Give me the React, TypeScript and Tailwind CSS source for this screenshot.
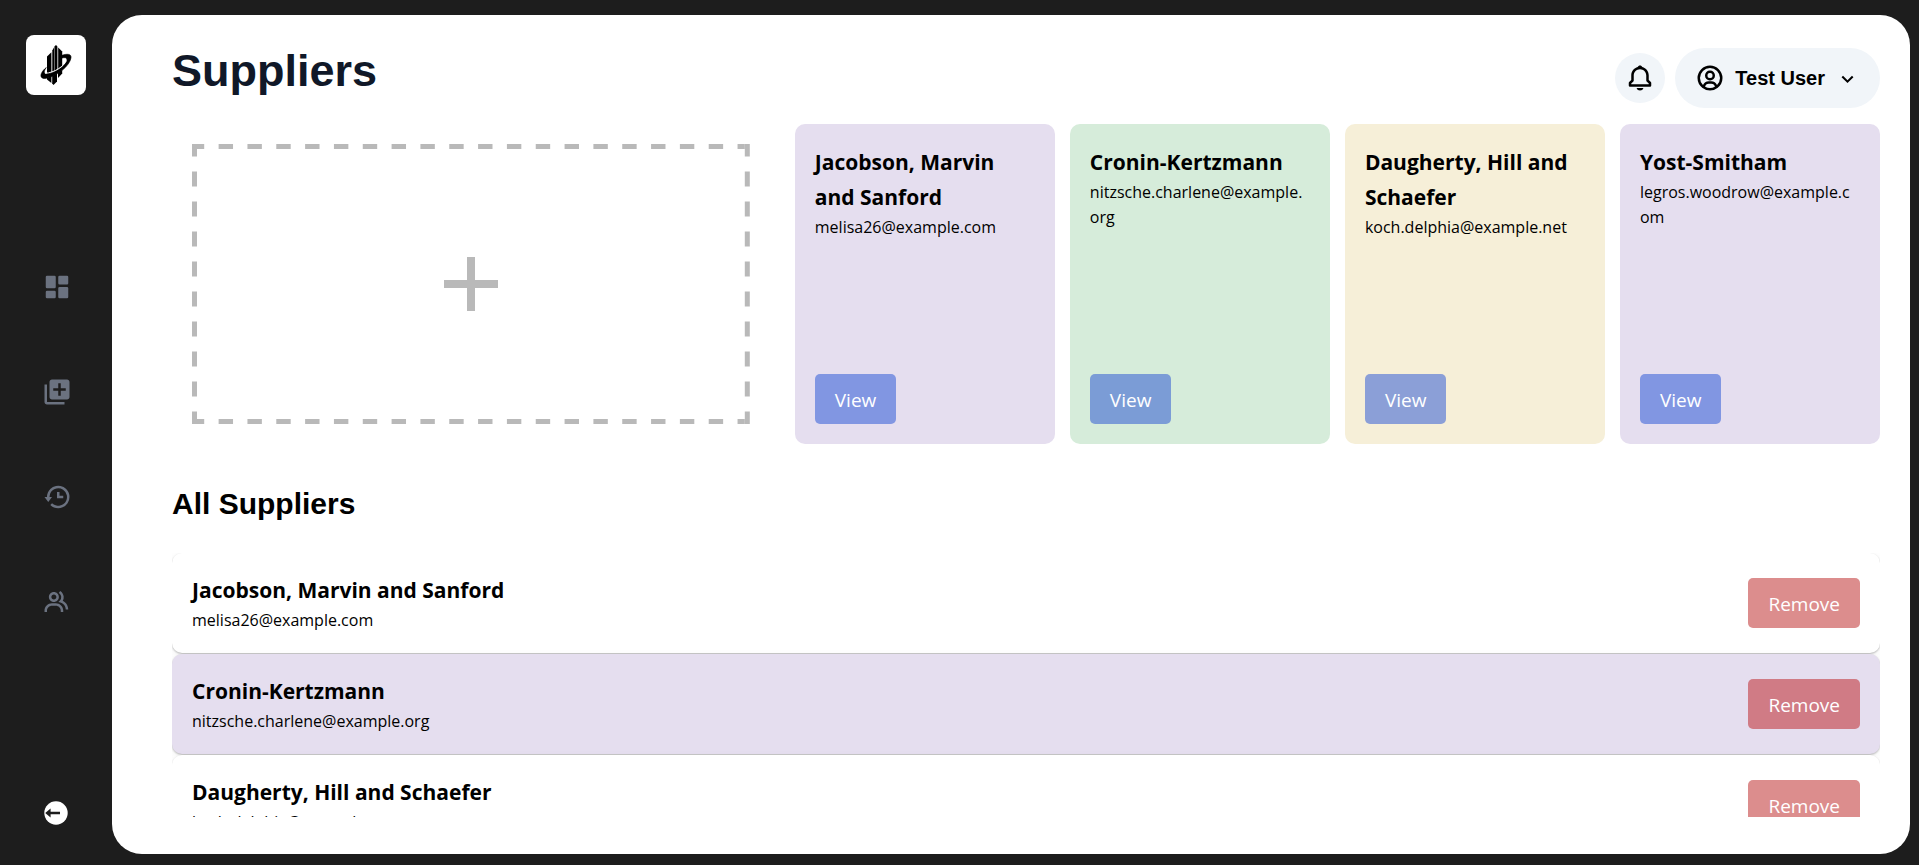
import { BiBell, BiChevronDown, BiGroup, BiHistory, BiSolidDashboard, BiUserCircle } from "react-icons/bi";
import { MdLibraryAdd } from "react-icons/md";

type Supplier = { name: string; email: string };

const suppliers: Supplier[] = [
  { name: "Jacobson, Marvin and Sanford", email: "melisa26@example.com" },
  { name: "Cronin-Kertzmann", email: "nitzsche.charlene@example.org" },
  { name: "Daugherty, Hill and Schaefer", email: "koch.delphia@example.net" },
  { name: "Yost-Smitham", email: "legros.woodrow@example.com" },
];

const cardStyles = [
  { card: "bg-[#e5deef]", button: "bg-[#8196e2]" },
  { card: "bg-[#d6ecda]", button: "bg-[#7b9cd6]" },
  { card: "bg-[#f6efd8]", button: "bg-[#8b9fd7]" },
  { card: "bg-[#e5deef]", button: "bg-[#8196e2]" },
];

const navigation = [
  { label: "Dashboard", Icon: BiSolidDashboard },
  { label: "Add item", Icon: MdLibraryAdd },
  { label: "History", Icon: BiHistory },
  { label: "Suppliers", Icon: BiGroup },
];

function Logo() {
  return (
    <svg viewBox="0 0 60 60" className="size-full" aria-hidden="true">
      <path d="M21 21.5 L25.4 17.2 V38 L21 39.5 Z" />
      <path d="M26.3 15.5 L28 12.5 V36.5 L26.3 37.5 Z" />
      <path d="M28.4 11.5 L30 10 L31.4 11.5 V34.5 L28.4 36.5 Z" />
      <path d="M32.2 12.5 L36.2 16.5 V31 L32.2 34 Z" />
      <path d="M21 43 L25.4 41 V48 L21 44.5 Z" />
      <path d="M26.2 40.8 L31 38.4 V46.5 L27.5 50 L26.2 48.5 Z" />
      <path d="M32 37.6 L36.2 35 V38.5 L32 43 Z" />
      <path
        d="M36 20.3 C41 18.6 45.6 18.8 45 22.8 C44 30.5 31 41.7 19.5 43.4 C15.5 43.9 14 41.5 15.5 38.2 C16.6 35.8 18.3 34.1 20.3 32.6 C17.6 36 17.6 38.8 20.5 38.8 C28.5 38.6 41 29.5 40.9 24.4 C40.7 22.4 38.7 22.4 36 23 Z"
        stroke="black"
        strokeWidth="0.6"
      />
      <path d="M19 38.3 C28 38 38.5 31 40.4 25.4" fill="none" stroke="white" strokeWidth="1" />
    </svg>
  );
}

function CollapseIcon() {
  return (
    <svg viewBox="0 0 24 24" className="size-6" aria-hidden="true">
      <circle cx="12" cy="12" r="11.7" fill="white" />
      <path d="M1.2 12 L6.6 7.4 V10.8 H16 V13.2 H6.6 V16.6 Z" fill="#1d1d1d" />
    </svg>
  );
}

function DashedFrame() {
  return (
    <svg
      viewBox="0 0 558 280"
      preserveAspectRatio="none"
      className="absolute inset-0 size-full"
      fill="none"
      stroke="#b9b9b9"
      strokeWidth="5"
      aria-hidden="true"
    >
      <path d="M5 2.5 H553 M5 277.5 H553" strokeDasharray="14.42 14.42" strokeDashoffset="7.21" />
      <path d="M2.5 5 V275 M555.5 5 V275" strokeDasharray="15 15" strokeDashoffset="7.5" />
      <path d="M0 2.5 H5 M553 2.5 H558 M0 277.5 H5 M553 277.5 H558" />
    </svg>
  );
}

function SupplierCard({ supplier, card, button }: { supplier: Supplier; card: string; button: string }) {
  return (
    <article className={`flex flex-col items-start justify-between rounded-[10px] p-5 ${card}`}>
      <div className="w-full pt-px">
        <h3 className="text-[21px] leading-[35px] font-bold">{supplier.name}</h3>
        <p className="pr-1 text-base leading-[25px] break-all">{supplier.email}</p>
      </div>
      <button type="button" className={`h-[50px] rounded-[5px] px-5 pt-0.5 text-[19px] text-white ${button}`}>
        View
      </button>
    </article>
  );
}

function SupplierRow({ supplier, highlighted }: { supplier: Supplier; highlighted: boolean }) {
  return (
    <li
      className={`flex shrink-0 items-center justify-between rounded-[10px] p-5 shadow-[0_1px_2px_rgba(0,0,0,0.25),0_2px_8px_rgba(0,0,0,0.05)] ${
        highlighted ? "bg-[#e5deef]" : "bg-white"
      }`}
    >
      <div>
        <h3 className="text-[21px] leading-[35px] font-bold">{supplier.name}</h3>
        <p className="text-base leading-[25px]">{supplier.email}</p>
      </div>
      <button
        type="button"
        className={`h-[50px] rounded-[5px] px-5 pt-0.5 text-[19px] text-white ${highlighted ? "bg-[#d07b85]" : "bg-[#dc8d8d]"}`}
      >
        Remove
      </button>
    </li>
  );
}

export default function App() {
  return (
    <div className="flex h-screen bg-[#1d1d1d] pt-[15px] pr-[9px] pb-[11px] font-['Open_Sans','Noto_Sans',sans-serif] text-black">
      <aside className="flex w-28 shrink-0 flex-col items-center justify-between pt-5 pb-[29px]">
        <a href="#" aria-label="Home" className="block size-[60px] rounded-lg bg-white">
          <Logo />
        </a>
        <nav className="mb-2 flex flex-col gap-[75px] pl-0.5 text-[#6b7280]">
          {navigation.map(({ label, Icon }) => (
            <a key={label} href="#" aria-label={label}>
              <Icon className="size-[30px]" />
            </a>
          ))}
        </nav>
        <button type="button" aria-label="Collapse sidebar">
          <CollapseIcon />
        </button>
      </aside>

      <main className="flex min-w-0 flex-1 flex-col rounded-[30px] bg-white pt-[30px] pr-[30px] pb-[37px] pl-[60px]">
        <header className="flex h-[66px] shrink-0 items-center justify-between font-['Liberation_Sans',Arial,sans-serif]">
          <h1 className="self-start pt-px text-[45px] leading-[50px] font-bold text-gray-900">Suppliers</h1>
          <div className="flex items-center gap-[10px]">
            <button
              type="button"
              aria-label="Notifications"
              className="flex size-[50px] items-center justify-center rounded-full bg-slate-100"
            >
              <BiBell className="size-[30px]" />
            </button>
            <button
              type="button"
              className="flex h-[60px] items-center gap-[10px] rounded-full bg-slate-100 px-5 text-xl font-bold"
            >
              <BiUserCircle className="size-[30px]" />
              Test User
              <BiChevronDown className="size-[25px]" />
            </button>
          </div>
        </header>

        <section className="mt-[13px] flex h-80 shrink-0 gap-[25px]">
          <div className="w-[35%] shrink-0 p-5">
            <button
              type="button"
              aria-label="Add supplier"
              className="relative flex size-full items-center justify-center"
            >
              <DashedFrame />
              <svg viewBox="0 0 54 54" className="size-[54px]" fill="#b9b9b9" aria-hidden="true">
                <path d="M23 0 H31 V23 H54 V31 H31 V54 H23 V31 H0 V23 H23 Z" />
              </svg>
            </button>
          </div>
          <div className="grid flex-1 grid-cols-4 gap-[15px]">
            {suppliers.map((supplier, index) => (
              <SupplierCard key={supplier.name} supplier={supplier} {...cardStyles[index]} />
            ))}
          </div>
        </section>

        <h2 className="mt-10 shrink-0 font-['Liberation_Sans',Arial,sans-serif] text-[30px] leading-10 font-bold">
          All Suppliers
        </h2>

        <ul className="mt-[29px] flex min-h-0 flex-1 flex-col gap-px overflow-x-hidden overflow-y-auto [scrollbar-width:none]">
          {suppliers.map((supplier, index) => (
            <SupplierRow key={supplier.name} supplier={supplier} highlighted={index % 2 === 1} />
          ))}
        </ul>
      </main>
    </div>
  );
}
